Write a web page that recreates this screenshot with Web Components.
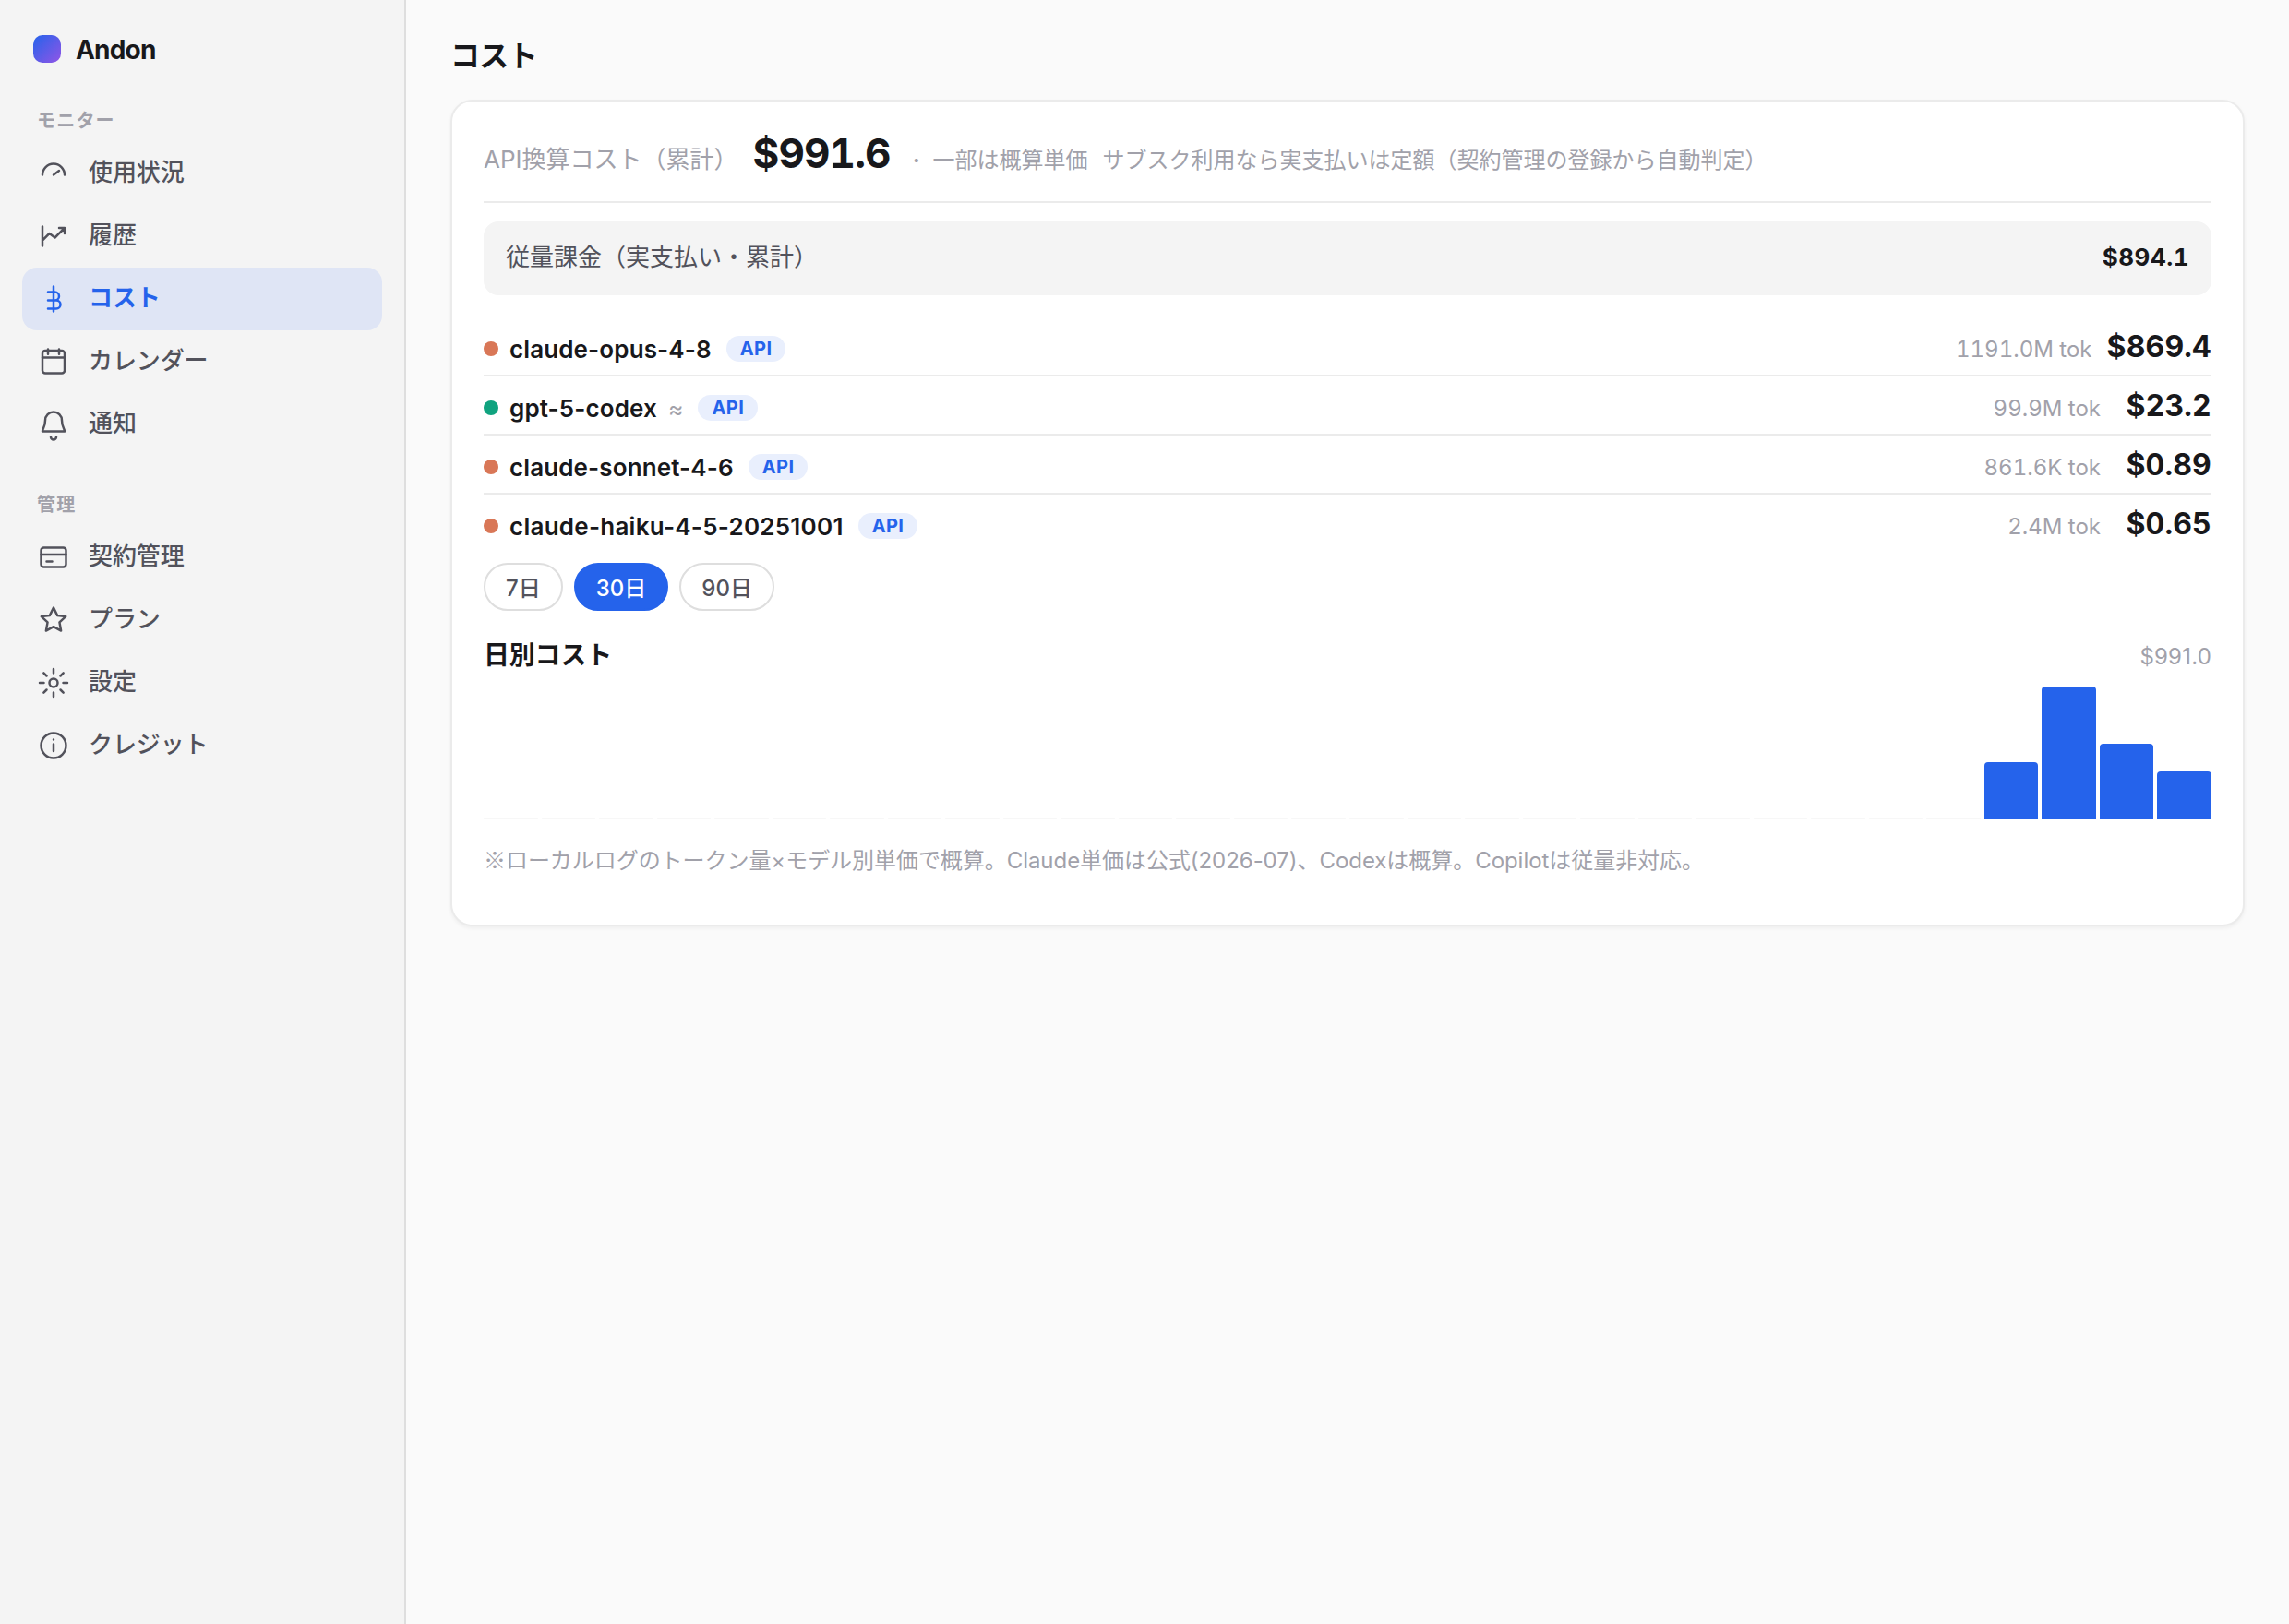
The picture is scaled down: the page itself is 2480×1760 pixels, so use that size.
<!DOCTYPE html>
<html lang="ja">
<head>
<meta charset="utf-8">
<title>Andon</title>
<style>
  html, body { margin: 0; height: 100%; }
  body {
    --accent: #2563eb;
    --text: #18181b;
    --text-2: #52525b;
    --text-3: #a1a1aa;
    --line: #ebebeb;
    --soft: #f4f4f4;
    background: #fafafa;
    color: var(--text);
    font-family: Inter, "Noto Sans CJK JP", sans-serif;
    font-size: 26px;
  }
  .mark { font-family: "Noto Sans CJK JP", sans-serif; }
  .sep { font-weight: 700; }
</style>
</head>
<body>
<andon-app>
  <andon-sidebar slot="sidebar">
    <nav-group label="モニター">
      <nav-item icon="gauge">使用状況</nav-item>
      <nav-item icon="history">履歴</nav-item>
      <nav-item icon="cost" active>コスト</nav-item>
      <nav-item icon="calendar">カレンダー</nav-item>
      <nav-item icon="bell">通知</nav-item>
    </nav-group>
    <nav-group label="管理">
      <nav-item icon="card">契約管理</nav-item>
      <nav-item icon="star">プラン</nav-item>
      <nav-item icon="settings">設定</nav-item>
      <nav-item icon="info">クレジット</nav-item>
    </nav-group>
  </andon-sidebar>
  <span slot="title">コスト</span>
  <cost-card>
    <cost-summary slot="summary" amount="$991.6">
      API換算コスト（累計）
      <span slot="approx"><span class="sep">·</span> 一部は概算単価</span>
      <span slot="note">サブスク利用なら実支払いは定額（契約管理の登録から自動判定）</span>
    </cost-summary>
    <metered-total amount="$894.1">従量課金（実支払い・累計）</metered-total>
    <div slot="models">
      <model-row color="#d97757" tokens="1191.0M tok" amount="$869.4">claude-opus-4-8</model-row>
      <model-row color="#10a37f" tokens="99.9M tok" amount="$23.2" approx>gpt-5-codex</model-row>
      <model-row color="#d97757" tokens="861.6K tok" amount="$0.89">claude-sonnet-4-6</model-row>
      <model-row color="#d97757" tokens="2.4M tok" amount="$0.65" last>claude-haiku-4-5-20251001</model-row>
    </div>
    <range-chip slot="range">7日</range-chip>
    <range-chip slot="range" active>30日</range-chip>
    <range-chip slot="range">90日</range-chip>
    <daily-chart slot="chart" total="$991.0" days="30" values="62,144,82,52">日別コスト</daily-chart>
    <span slot="foot"><span class="mark">※</span>ローカルログのトークン量×モデル別単価で概算。Claude単価は公式(2026-07)、Codexは概算。Copilotは従量非対応。</span>
  </cost-card>
</andon-app>

<script>
(function () {
  const ICONS = {
    gauge: '<path d="M4 13a8 8 0 0 1 16 0M12 13l4-3"/>',
    history: '<path d="M4 5v14M4 15l5-5 4 3 7-7M16 6h4v4"/>',
    cost: '<path d="M12 3v18M8 7h5a3 3 0 0 1 0 6H8m5 0h1a3 3 0 0 1 0 6H8"/>',
    calendar: '<rect x="4" y="4" width="16" height="16.3" rx="2"/><path d="M4 9h16M8 3v3.5M16 3v3.5"/>',
    bell: '<path d="M6 9a6 6 0 0 1 12 0c0 5 2 6 2 8H4c0-2 2-3 2-8zM10 21a2 2 0 0 0 4 0"/>',
    card: '<rect x="3" y="5" width="18" height="14" rx="2"/><path d="M3 10h18M7 15h4"/>',
    star: '<path d="M12 3l2.7 5.6 6.1.8-4.5 4.2 1.1 6.1L12 16.8l-5.4 2.9 1.1-6.1L3.2 9.4l6.1-.8z"/>',
    settings: '<circle cx="12" cy="12" r="3"/><path d="M12 2v3M12 19v3M2 12h3M19 12h3M4.9 4.9L7 7M17 17l2.1 2.1M19.1 4.9L17 7M7 17l-2.1 2.1"/>',
    info: '<circle cx="12" cy="12" r="9"/><path d="M12 11v5M12 7.7v.01"/>'
  };

  // Attach a shadow root and fill it
  class Base extends HTMLElement {
    constructor() {
      super();
      this.attachShadow({ mode: 'open' });
    }
    connectedCallback() {
      this.shadowRoot.innerHTML = this.render();
    }
    attr(name) {
      return this.getAttribute(name) || '';
    }
  }

  class AndonApp extends Base {
    render() {
      return `
        <style>
          :host { display: flex; min-height: 1760px; }
          main { flex: 1; min-width: 0; padding: 37px 48px; }
          h1 { margin: 0 0 23px; font-size: 32px; line-height: 48px; font-weight: 700; letter-spacing: -0.64px; }
        </style>
        <slot name="sidebar"></slot>
        <main>
          <h1><slot name="title"></slot></h1>
          <slot></slot>
        </main>
      `;
    }
  }

  class AndonSidebar extends Base {
    render() {
      return `
        <style>
          :host { display: block; box-sizing: border-box; width: 440px; flex: none; padding: 32px 24px; background: var(--soft); border-right: 2px solid #dedede; }
          .brand { display: flex; align-items: center; gap: 16px; height: 42px; padding: 0 12px; font-size: 28px; font-weight: 700; letter-spacing: -0.8px; }
          .logo { width: 30px; height: 30px; border-radius: 10px; background: linear-gradient(135deg, #2563eb, #9155e6); }
          .name { height: 42px; line-height: 44px; }
        </style>
        <div class="brand"><span class="logo"></span><span class="name">Andon</span></div>
        <slot></slot>
      `;
    }
  }

  class NavGroup extends Base {
    render() {
      return `
        <style>
          :host { display: block; padding-top: 42px; }
          .label { height: 30px; line-height: 30px; padding: 0 16px 8px; font-size: 20px; font-weight: 700; letter-spacing: 1.2px; color: var(--text-3); }
          :host(:nth-of-type(2)) { padding-top: 38px; }
        </style>
        <div class="label">${this.attr('label')}</div>
        <slot></slot>
      `;
    }
  }

  class NavItem extends Base {
    render() {
      return `
        <style>
          :host { display: flex; align-items: center; gap: 20px; height: 68px; padding: 0 16px; border-radius: 16px; color: var(--text-2); font-weight: 500; line-height: 66px; letter-spacing: -0.1px; }
          :host([active]) { background: #dfe5f5; color: var(--accent); font-weight: 700; }
          svg { width: 36px; height: 36px; fill: none; stroke: currentColor; stroke-width: 1.65; stroke-linecap: round; stroke-linejoin: round; }
          span { height: 68px; }
        </style>
        <svg viewBox="0 0 24 24">${ICONS[this.attr('icon')]}</svg>
        <span><slot></slot></span>
      `;
    }
  }

  class CostCard extends Base {
    render() {
      return `
        <style>
          :host { display: block; box-sizing: border-box; height: 896px; padding: 34px; background: #fff; border: 2px solid var(--line); border-radius: 24px; box-shadow: 0 2px 4px rgba(0, 0, 0, 0.05); }
          .range { display: flex; gap: 12px; margin: 12px 0 24px; }
          .foot { margin-top: 24px; font-size: 24px; line-height: 38px; letter-spacing: -0.05px; color: var(--text-3); }
        </style>
        <slot name="summary"></slot>
        <slot></slot>
        <slot name="models"></slot>
        <div class="range"><slot name="range"></slot></div>
        <slot name="chart"></slot>
        <div class="foot"><slot name="foot"></slot></div>
      `;
    }
  }

  class CostSummary extends Base {
    render() {
      return `
        <style>
          :host { display: flex; align-items: baseline; height: 74px; border-bottom: 2px solid var(--line); color: var(--text-3); line-height: 44px; white-space: nowrap; }
          b { margin: 0 24px 0 16px; font-size: 44px; font-weight: 700; color: var(--text); letter-spacing: -0.88px; font-variant-numeric: tabular-nums; }
          .sub { display: flex; gap: 16px; font-size: 24px; }
          slot[name="approx"] { word-spacing: 7px; }
        </style>
        <span><slot></slot></span>
        <b>${this.attr('amount')}</b>
        <span class="sub"><slot name="approx"></slot><slot name="note"></slot></span>
      `;
    }
  }

  class MeteredTotal extends Base {
    render() {
      return `
        <style>
          :host { display: flex; justify-content: space-between; height: 80px; margin: 20px 0 24px; padding: 0 24px; border-radius: 16px; background: var(--soft); color: var(--text-2); line-height: 78px; }
          b { color: var(--text); font-weight: 700; letter-spacing: 0.5px; font-variant-numeric: tabular-nums; }
        </style>
        <span><slot></slot></span>
        <b>${this.attr('amount')}</b>
      `;
    }
  }

  class ModelRow extends Base {
    render() {
      const approx = this.hasAttribute('approx') ? '<span class="approx">≈</span>' : '';
      return `
        <style>
          :host { display: flex; align-items: center; box-sizing: border-box; height: 64px; padding-top: 6px; border-bottom: 2px solid var(--line); }
          :host([last]) { height: 62px; border-bottom: 0; }
          .dot { width: 16px; height: 16px; margin-right: 12px; border-radius: 50%; background: ${this.attr('color')}; }
          .name { padding-top: 2px; font-weight: 600; line-height: 54px; letter-spacing: 0.12px; }
          :host([last]) .name { letter-spacing: 0.25px; }
          .approx { margin-left: 12px; padding-top: 2px; font-size: 25px; color: var(--text-3); }
          .badge { margin-left: 16px; padding: 1px 15px 0; border-radius: 14px; background: #e9effd; color: var(--accent); font-size: 20px; font-weight: 700; line-height: 27px; letter-spacing: 0.4px; }
          .right { display: flex; align-items: baseline; gap: 16px; margin-left: auto; font-variant-numeric: tabular-nums; line-height: 52px; padding-bottom: 2px; }
          .tok { font-size: 24px; color: var(--text-3); }
          b { min-width: 104px; text-align: right; font-size: 32px; font-weight: 700; letter-spacing: 0.2px; }
        </style>
        <span class="dot"></span>
        <span class="name"><slot></slot></span>${approx}
        <span class="badge">API</span>
        <div class="right"><span class="tok">${this.attr('tokens')}</span><b>${this.attr('amount')}</b></div>
      `;
    }
  }

  class RangeChip extends Base {
    render() {
      return `
        <style>
          :host { box-sizing: border-box; height: 52px; padding: 0 22px; border: 2px solid #dedede; border-radius: 26px; background: #fff; color: var(--text-2); font-size: 24px; font-weight: 500; line-height: 51px; }
          :host([active]) { background: var(--accent); border-color: var(--accent); color: #fff; }
        </style>
        <slot></slot>
      `;
    }
  }

  class DailyChart extends Base {
    render() {
      const values = this.attr('values').split(',').map(Number);
      const empty = Number(this.attr('days')) - values.length;
      const bars = Array(empty).fill('<i class="zero"></i>').join('') +
        values.map((v) => `<i style="height:${v}px"></i>`).join('');
      return `
        <style>
          :host { display: block; }
          .head { display: flex; justify-content: space-between; align-items: baseline; height: 48px; line-height: 48px; }
          .title { font-size: 28px; font-weight: 700; letter-spacing: -0.2px; }
          .total { font-size: 24px; color: var(--text-3); letter-spacing: 0.2px; }
          .bars { display: flex; align-items: flex-end; gap: 4px; height: 144px; margin-top: 10px; }
          i { flex: 1; background: var(--accent); border-radius: 4px 4px 0 0; }
          .zero { height: 2px; background: #f7f7f7; }
        </style>
        <div class="head"><span class="title"><slot></slot></span><span class="total">${this.attr('total')}</span></div>
        <div class="bars">${bars}</div>
      `;
    }
  }

  customElements.define('andon-app', AndonApp);
  customElements.define('andon-sidebar', AndonSidebar);
  customElements.define('nav-group', NavGroup);
  customElements.define('nav-item', NavItem);
  customElements.define('cost-card', CostCard);
  customElements.define('cost-summary', CostSummary);
  customElements.define('metered-total', MeteredTotal);
  customElements.define('model-row', ModelRow);
  customElements.define('range-chip', RangeChip);
  customElements.define('daily-chart', DailyChart);
})();
</script>
</body>
</html>
